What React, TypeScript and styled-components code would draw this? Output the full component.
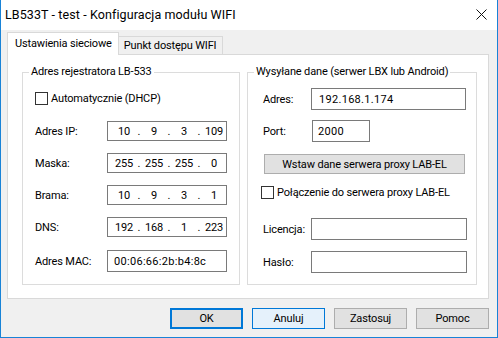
import { FC } from 'react';
import styled, { createGlobalStyle } from 'styled-components';

const GlobalStyle = createGlobalStyle`
  html, body {
    margin: 0;
    padding: 0;
    background: #ffffff;
  }
  * {
    box-sizing: border-box;
  }
`;

const Window = styled.div`
  width: 498px;
  height: 338px;
  display: flex;
  flex-direction: column;
  background: #f0f0f0;
  border: 1px solid #1883d7;
  border-top: none;
  font-family: Roboto, 'Liberation Sans', sans-serif;
  font-size: 11px;
  letter-spacing: -0.15px;
  color: #000;
  overflow: hidden;
`;

const TitleBar = styled.div`
  height: 30px;
  flex: none;
  display: flex;
  align-items: center;
  justify-content: space-between;
  background: #ffffff;
  padding: 0 10px 2px 4px;
`;

const Title = styled.span`
  font-size: 12.5px;
  letter-spacing: 0.1px;
`;

const Body = styled.div`
  display: flex;
  flex-direction: column;
  padding: 2px 8px 0 6px;
`;

const TabStrip = styled.div`
  display: flex;
  align-items: flex-end;
  height: 22px;
  position: relative;
  z-index: 1;
`;

const Tab = styled.div<{ active?: boolean }>`
  display: flex;
  align-items: center;
  height: ${p => (p.active ? '23px' : '18px')};
  margin-bottom: ${p => (p.active ? '-1px' : '0')};
  padding: ${p => (p.active ? '0 6px 2px 7px' : '0 6px 0 5px')};
  background: ${p => (p.active ? '#ffffff' : '#f0f0f0')};
  border: 1px solid #d9d9d9;
  border-bottom: none;
  border-left: ${p => (p.active ? '1px solid #d9d9d9' : 'none')};
`;

const Panel = styled.div`
  height: 245px;
  width: 482px;
  background: #ffffff;
  border: 1px solid #d9d9d9;
  display: flex;
  gap: 7px;
  padding: 10px 11px 13px 14px;
`;

const Group = styled.fieldset<{ w: number }>`
  width: ${p => p.w}px;
  margin: 0;
  padding: 0;
  min-width: 0;
  border: 1px solid #dcdcdc;
  display: flex;
  flex-direction: column;
`;

const Legend = styled.legend`
  margin-left: 6px;
  padding: 0 2px;
  line-height: 14px;
  font-size: 11px;
`;

const Row = styled.div<{ top: number; pad: number }>`
  display: flex;
  align-items: center;
  margin-top: ${p => p.top}px;
  padding-left: ${p => p.pad}px;
`;

const Label = styled.span<{ w: number }>`
  width: ${p => p.w}px;
  flex: none;
`;

const Field = styled.div<{ w: number; h: number; pad?: number }>`
  width: ${p => p.w}px;
  height: ${p => p.h}px;
  border: 1px solid #7a7a7a;
  background: #ffffff;
  display: flex;
  align-items: center;
  padding-left: ${p => p.pad ?? 6}px;
  letter-spacing: 0.3px;
`;

const IpBox = styled.div`
  width: 120px;
  height: 20px;
  border: 1px solid #7a7a7a;
  background: #ffffff;
  display: flex;
  align-items: center;
  padding-left: 4px;
`;

const Octet = styled.span`
  width: 24px;
  text-align: center;
`;

const Dot = styled.span`
  width: 6px;
  text-align: center;
`;

const Check = styled.span`
  width: 13px;
  height: 13px;
  border: 1px solid #333333;
  background: #ffffff;
  flex: none;
  margin-right: 3px;
`;

const ProxyButton = styled.div`
  margin-left: 16px;
  margin-top: 12px;
  width: 201px;
  height: 20px;
  background: #e1e1e1;
  border: 1px solid #adadad;
  display: flex;
  align-items: center;
  justify-content: center;
`;

const ButtonBar = styled.div`
  display: flex;
  justify-content: flex-end;
  gap: 9px;
  margin-top: 9px;
`;

const Button = styled.div<{ variant?: 'default' | 'hover' }>`
  width: 73px;
  height: 21px;
  display: flex;
  align-items: center;
  justify-content: center;
  background: ${p => (p.variant === 'hover' ? '#e5f1fb' : '#e1e1e1')};
  border: 1px solid ${p => (p.variant ? '#0078d7' : '#adadad')};
  box-shadow: ${p => (p.variant === 'default' ? 'inset 0 0 0 1px #0078d7' : 'none')};
`;

const CloseIcon: FC = () => (
  <svg width="11" height="11" viewBox="0 0 11 11">
    <path d="M0.5 0.5 L10.5 10.5 M10.5 0.5 L0.5 10.5" stroke="#111" strokeWidth="1" fill="none" />
  </svg>
);

interface IpRowProps {
  label: string;
  octets: string[];
  top: number;
}

const IpRow: FC<IpRowProps> = ({ label, octets, top }) => (
  <Row top={top} pad={12}>
    <Label w={72}>{label}</Label>
    <IpBox>
      {octets.map((o, i) => (
        <span key={i} style={{ display: 'contents' }}>
          {i > 0 && <Dot>.</Dot>}
          <Octet>{o}</Octet>
        </span>
      ))}
    </IpBox>
  </Row>
);

const App: FC = () => (
  <>
    <GlobalStyle />
    <Window>
      <TitleBar>
        <Title>LB533T - test - Konfiguracja modułu WIFI</Title>
        <CloseIcon />
      </TitleBar>
      <Body>
        <TabStrip>
          <Tab active>Ustawienia sieciowe</Tab>
          <Tab>Punkt dostępu WIFI</Tab>
        </TabStrip>
        <Panel>
          <Group w={218}>
            <Legend>Adres rejestratora LB-533</Legend>
            <Row top={11} pad={12} style={{ height: 16 }}>
              <Check />
              <span>Automatycznie (DHCP)</span>
            </Row>
            <IpRow label="Adres IP:" octets={['10', '9', '3', '109']} top={15} />
            <IpRow label="Maska:" octets={['255', '255', '255', '0']} top={12} />
            <IpRow label="Brama:" octets={['10', '9', '3', '1']} top={12} />
            <IpRow label="DNS:" octets={['192', '168', '1', '223']} top={12} />
            <Row top={13} pad={12}>
              <Label w={72}>Adres MAC:</Label>
              <Field w={120} h={22} pad={6}>00:06:66:2b:b4:8c</Field>
            </Row>
          </Group>
          <Group w={230}>
            <Legend>Wysyłane dane (serwer LBX lub Android)</Legend>
            <Row top={9} pad={15}>
              <Label w={48}>Adres:</Label>
              <Field w={155} h={22} pad={7}>192.168.1.174</Field>
            </Row>
            <Row top={10} pad={15}>
              <Label w={49}>Port:</Label>
              <Field w={58} h={22} pad={5}>2000</Field>
            </Row>
            <ProxyButton>Wstaw dane serwera proxy LAB-EL</ProxyButton>
            <Row top={10} pad={13} style={{ height: 16 }}>
              <Check />
              <span>Połączenie do serwera proxy LAB-EL</span>
            </Row>
            <Row top={18} pad={15}>
              <Label w={48}>Licencja:</Label>
              <Field w={156} h={22} />
            </Row>
            <Row top={11} pad={15}>
              <Label w={48}>Hasło:</Label>
              <Field w={156} h={22} />
            </Row>
          </Group>
        </Panel>
        <ButtonBar>
          <Button variant="default">OK</Button>
          <Button variant="hover">Anuluj</Button>
          <Button>Zastosuj</Button>
          <Button>Pomoc</Button>
        </ButtonBar>
      </Body>
    </Window>
  </>
);

export default App;
